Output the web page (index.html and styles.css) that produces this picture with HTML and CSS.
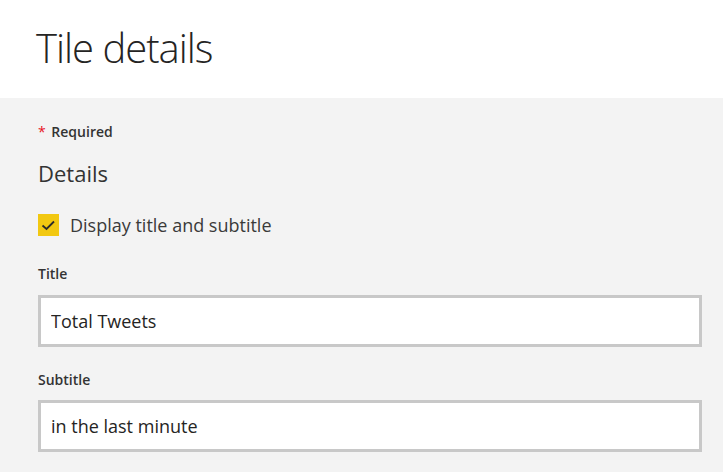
FILE: index.html
```html
<!DOCTYPE html>
<html lang="en">
<head>
<meta charset="utf-8">
<title>Tile details</title>
<link rel="stylesheet" href="styles.css">
</head>
<body>
<header class="header">
  <h1 class="page-title">Tile details</h1>
</header>
<main class="content">
  <div class="required"><span class="asterisk">*</span> Required</div>
  <h2 class="section-title">Details</h2>
  <label class="check-row">
    <span class="checkbox">
      <svg width="21" height="22" viewBox="0 0 21 22"><path d="M4.5 11.5 L8.5 15 L16 7.5" fill="none" stroke="#2b2b2b" stroke-width="1.8"/></svg>
    </span>
    <span class="check-label">Display title and subtitle</span>
  </label>
  <div class="field">
    <div class="field-label">Title</div>
    <input class="text-input" type="text" value="Total Tweets">
  </div>
  <div class="field field-second">
    <div class="field-label">Subtitle</div>
    <input class="text-input" type="text" value="in the last minute">
  </div>
</main>
</body>
</html>
```
FILE: styles.css
```css
html, body {
  margin: 0;
  padding: 0;
}
body {
  font-family: "Open Sans", "Noto Sans", sans-serif;
  color: #252423;
  background: #f3f3f3;
  width: 723px;
  height: 472px;
  overflow: hidden;
}
.header {
  background: #ffffff;
  height: 98px;
  box-sizing: border-box;
  padding: 24px 0 0 36px;
}
.page-title {
  margin: 0;
  font-size: 40px;
  font-weight: 300;
  line-height: 48px;
  letter-spacing: -1px;
  color: #252423;
}
.content {
  padding: 23.5px 21px 0 38px;
  display: flex;
  flex-direction: column;
}
.required {
  font-size: 14px;
  line-height: 20px;
  font-weight: 600;
  color: #333333;
}
.asterisk {
  color: #e81123;
  font-weight: 400;
  margin-right: 2px;
}
.section-title {
  margin: 16px 0 0 0;
  font-size: 22px;
  line-height: 30px;
  font-weight: 400;
  color: #333333;
}
.check-row {
  margin-top: 26.5px;
  display: flex;
  align-items: center;
  gap: 11px;
  height: 22px;
}
.checkbox {
  width: 21px;
  height: 22px;
  background: #f2c811;
  display: flex;
}
.check-label {
  font-size: 18px;
  line-height: 22px;
  color: #3a3a3a;
}
.field {
  margin-top: 27.6px;
  display: flex;
  flex-direction: column;
  gap: 11.4px;
}
.field-second {
  margin-top: 22.6px;
  gap: 10.4px;
}
.field-label {
  font-size: 14px;
  line-height: 20px;
  font-weight: 600;
  color: #333333;
}
.text-input {
  box-sizing: border-box;
  width: 100%;
  height: 52px;
  margin: 0;
  border: 3px solid #c8c8c8;
  background: #ffffff;
  padding: 0 10px;
  font-family: "Open Sans", "Noto Sans", sans-serif;
  font-size: 18px;
  color: #252423;
  outline: none;
}
```
